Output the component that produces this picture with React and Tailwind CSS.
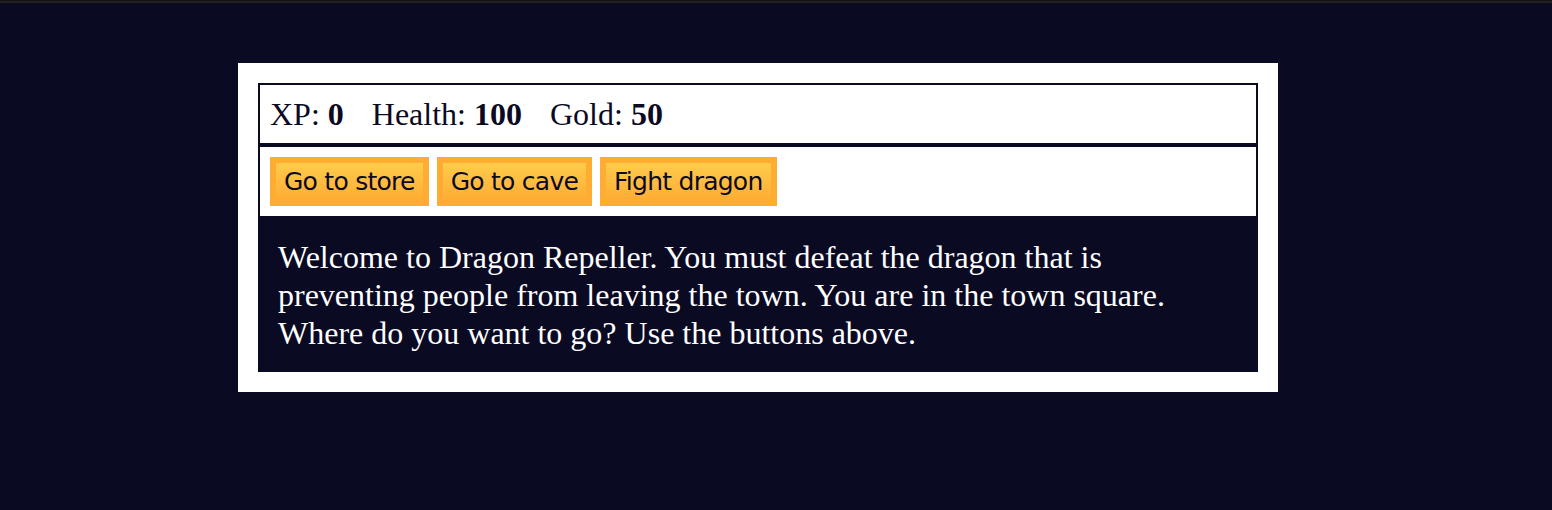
export default function App() {
  const serif = { fontFamily: '"Liberation Serif", "Times New Roman", serif' };
  const btn =
    "h-[49px] px-[8px] border-[6px] border-[#feac32] bg-gradient-to-b from-[#fecc4c] to-[#ffac33] text-[#0a0a23] text-[25px] leading-none tracking-[-0.75px] cursor-pointer";
  return (
    <div className="min-h-[510px] w-full bg-[#0a0a23]">
      <div className="h-[3px] bg-[#222226] border-t border-[#141418]" />
      <div className="ml-[238px] mt-[60px] w-[1040px] bg-white p-[20px]">
        <div
          className="border-2 border-[#0a0a23] p-[10px] text-[#0a0a23] text-[32px] leading-[38px]"
          style={serif}
        >
          <span className="pr-[20px]">
            XP: <strong>0</strong>
          </span>{" "}
          <span className="pr-[20px]">
            Health: <strong>100</strong>
          </span>{" "}
          <span className="pr-[20px]">
            Gold: <strong>50</strong>
          </span>
        </div>
        <div
          className="flex gap-[8px] border-2 border-[#0a0a23] p-[10px]"
          style={{ fontFamily: '"DejaVu Sans", Tahoma, sans-serif' }}
        >
          <button className={btn}>Go to store</button>
          <button className={btn}>Go to cave</button>
          <button className={btn}>Fight dragon</button>
        </div>
        <div
          className="bg-[#0a0a23] p-[20px] text-white text-[32px] leading-[38px]"
          style={serif}
        >
          Welcome to Dragon Repeller. You must defeat the dragon that is preventing people from leaving the
          town. You are in the town square. Where do you want to go? Use the buttons above.
        </div>
      </div>
    </div>
  );
}
